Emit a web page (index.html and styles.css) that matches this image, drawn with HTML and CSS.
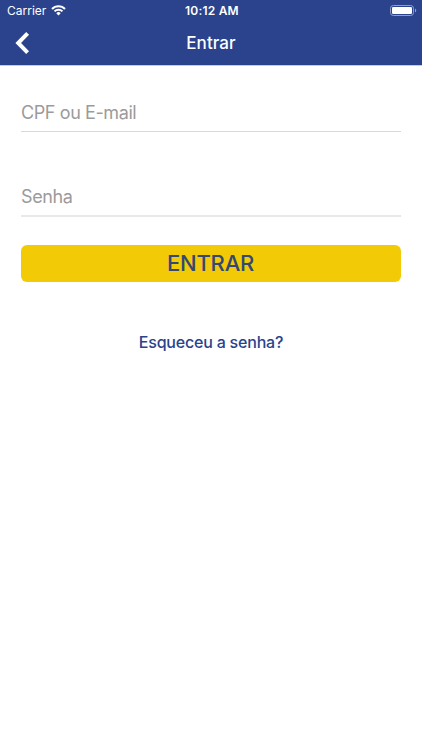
FILE: index.html
```html
<!DOCTYPE html>
<html lang="pt-BR">

<head>
	<meta charset="UTF-8">
	<meta name="viewport" content="width=device-width, initial-scale=1.0">
	<title>Entrar</title>
	<link rel="stylesheet" href="styles.css">
</head>

<body>
	<header class="header">
		<div class="status">
			<div class="carrier">
				<span>Carrier</span>
				<svg class="wifi" width="15" height="11" viewBox="0 0 15 11">
					<path d="M1 4a9 9 0 0 1 13 0M3.5 6.4a5.6 5.6 0 0 1 8 0" fill="none" stroke="#fff" stroke-width="2" />
					<path d="M5.3 8.2a3.1 3.1 0 0 1 4.4 0L7.5 10.4z" fill="#fff" />
				</svg>
			</div>
			<span class="time">10:12 AM</span>
			<svg class="battery" width="27" height="12" viewBox="0 0 27 12">
				<rect x=".5" y=".5" width="23" height="10" rx="2.8" fill="none" stroke="#8f9dca" />
				<rect x="2" y="2" width="20" height="7" rx="1.2" fill="#fff" />
				<path d="M25 3.5v4c1.7-.7 1.7-3.3 0-4z" fill="#8f9dca" />
			</svg>
		</div>
		<div class="navbar">
			<a class="back" href="#" aria-label="Voltar">
				<svg width="16" height="24" viewBox="0 0 16 24">
					<path d="M12.6 2.4L3.2 12l9.4 9.6" fill="none" stroke="#fff" stroke-width="4" />
				</svg>
			</a>
			<h1>Entrar</h1>
		</div>
	</header>
	<form class="login">
		<input class="field" type="text" placeholder="CPF ou E-mail">
		<input class="field password" type="password" placeholder="Senha">
		<button class="submit" type="submit">ENTRAR</button>
		<a class="forgot" href="#">Esqueceu a senha?</a>
	</form>
</body>

</html>
```
FILE: styles.css
```css
* {
	box-sizing: border-box;
}

body {
	margin: 0;
	background-color: #fff;
	font-family: Inter, "Liberation Sans", sans-serif;
}

.header {
	height: 66px;
	background-color: #2a438c;
	border-bottom: 1px solid #c3cbe1;
	color: #fff;
}

.status {
	display: grid;
	grid-template-columns: 1fr auto 1fr;
	align-items: center;
	height: 21px;
	padding: 0 5px 0 7px;
	font-size: 12px;
}

.carrier {
	display: flex;
	align-items: center;
	gap: 5px;
}

.time {
	font-weight: 600;
	letter-spacing: 0.2px;
}

.battery {
	justify-self: end;
}

.navbar {
	display: grid;
	grid-template-columns: 60px 1fr 60px;
	align-items: center;
	height: 43px;
}

.back {
	display: flex;
	padding-left: 15px;
}

h1 {
	margin: 0;
	font-size: 17px;
	font-weight: 500;
	letter-spacing: 0.1px;
	line-height: 20px;
	text-align: center;
}

.login {
	display: flex;
	flex-direction: column;
	padding: 26px 21px 0;
}

.field {
	width: 100%;
	height: 40px;
	margin: 0 0 45px;
	padding: 1px 0 0;
	border: 0;
	border-bottom: 1px solid #d8d8d8;
	border-radius: 0;
	background: none;
	font-family: inherit;
	font-size: 18px;
	letter-spacing: -0.4px;
	outline: none;
}

.password {
	margin-bottom: 28px;
	border-bottom: 2px solid #e9e9e9;
}

.field::placeholder {
	color: #9b9b9b;
}

.submit {
	height: 37px;
	padding: 0 1px 2px 0;
	border: 0;
	border-radius: 6px;
	background-color: #f2ca06;
	color: #344775;
	font-family: inherit;
	font-size: 22px;
	font-weight: 500;
	letter-spacing: -0.2px;
}

.forgot {
	margin-top: 50px;
	color: #2a438c;
	font-size: 16px;
	font-weight: 500;
	letter-spacing: -0.2px;
	line-height: 20px;
	text-align: center;
	text-decoration: none;
}
```
